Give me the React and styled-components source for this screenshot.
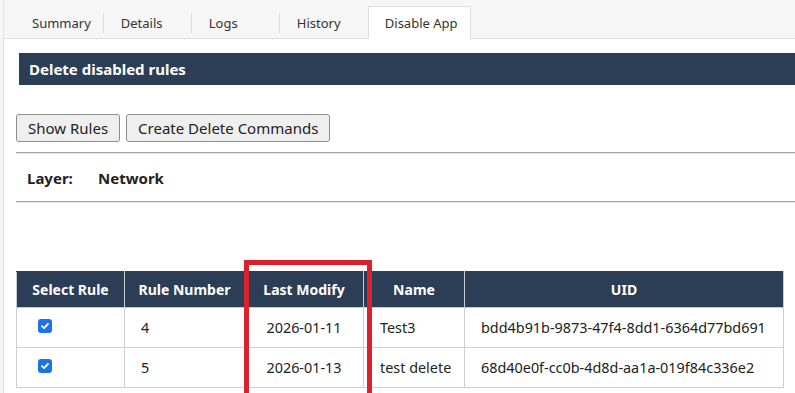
import React from "react";
import styled, { createGlobalStyle } from "styled-components";

const GlobalStyle = createGlobalStyle`
  html, body {
    margin: 0;
    padding: 0;
    background: #f6f6f6;
    font-family: "Noto Sans", "Open Sans", Arial, sans-serif;
    color: #222;
  }
`;

const Page = styled.div`
  margin-left: 3px;
  min-height: 393px;
  border-left: 1px solid #e2e2e2;
  background: #fff;
  overflow: hidden;
`;

const TabBar = styled.div`
  display: flex;
  align-items: flex-end;
  height: 38px;
  padding-left: 11px;
  background: #f6f6f6;
  border-bottom: 1px solid #dedede;
`;

const Tab = styled.div`
  position: relative;
  box-sizing: border-box;
  min-width: 88px;
  padding: 0 12px 0 16px;
  display: flex;
  align-items: center;
  font-size: 13px;
  color: #333;
  margin-bottom: ${(p) => (p.$active ? "-1px" : "0")};
  height: ${(p) => (p.$active ? "33px" : "32px")};
  background: ${(p) => (p.$active ? "#fff" : "transparent")};
  border: 1px solid ${(p) => (p.$active ? "#dedede" : "transparent")};
  border-bottom: none;

  &::after {
    content: "";
    display: ${(p) => (p.$sep ? "block" : "none")};
    position: absolute;
    right: -1px;
    top: 6px;
    bottom: 5px;
    width: 1px;
    background: #dcdcdc;
  }
`;

const Content = styled.div`
  padding: 14px 0 0 12px;
`;

const SectionHeader = styled.div`
  margin-left: 3px;
  height: 32px;
  display: flex;
  align-items: center;
  padding-left: 10px;
  background: #2c3e55;
  color: #fff;
  font-weight: 700;
  font-size: 15px;
`;

const ButtonRow = styled.div`
  display: flex;
  gap: 6px;
  margin-top: 29px;
`;

const Button = styled.button`
  height: 28px;
  padding: 0 11px;
  font-family: inherit;
  font-size: 15px;
  color: #222;
  background: #efefef;
  border: 1px solid #8d8d8d;
  border-radius: 3px;
`;

const Rule = styled.hr`
  margin: 0;
  border: none;
  border-top: 1px solid #a6a6a6;
  border-bottom: 1px solid #e6e6e6;
`;

const TopRule = styled(Rule)`
  margin-top: 10px;
`;

const LayerRow = styled.div`
  display: flex;
  align-items: center;
  height: 47px;
  padding-left: 11px;
  font-size: 15px;
  font-weight: 700;
`;

const LayerLabel = styled.span`
  width: 71px;
`;

const TableWrap = styled.div`
  position: relative;
  margin-top: 68px;
`;

const Table = styled.table`
  width: 767px;
  table-layout: fixed;
  border-collapse: collapse;
  font-size: 14.4px;
`;

const Th = styled.th`
  width: ${(p) => p.$w}px;
  height: 36px;
  padding: 0;
  box-sizing: border-box;
  background: #2c3e55;
  color: #fff;
  font-size: 14px;
  font-weight: 700;
  text-align: center;
  border: 1px solid #c7ccd3;
  border-top-color: #2c3e55;
`;

const Td = styled.td`
  height: 40px;
  padding: 0 0 0 ${(p) => (p.$align === "center" ? 0 : 16)}px;
  box-sizing: border-box;
  white-space: nowrap;
  border: 1px solid #cfcfcf;
  text-align: ${(p) => p.$align || "left"};
  color: #222;
`;

const CheckBox = styled.span`
  display: inline-flex;
  align-items: center;
  justify-content: center;
  width: 14px;
  height: 14px;
  margin-left: 5px;
  margin-bottom: 5px;
  border-radius: 3px;
  background: #1a73e8;
  vertical-align: middle;
`;

const Highlight = styled.div`
  position: absolute;
  left: 228px;
  top: -11px;
  width: 128px;
  height: 150px;
  box-sizing: border-box;
  border: 5px solid #d8232e;
  pointer-events: none;
`;

const columns = [
  { label: "Select Rule", w: 108 },
  { label: "Rule Number", w: 120 },
  { label: "Last Modify", w: 119 },
  { label: "Name", w: 101 },
  { label: "UID", w: 319 },
];

const rules = [
  { num: 4, date: "2026-01-11", name: "Test3", uid: "bdd4b91b-9873-47f4-8dd1-6364d77bd691" },
  { num: 5, date: "2026-01-13", name: "test delete", uid: "68d40e0f-cc0b-4d8d-aa1a-019f84c336e2" },
];

const tabs = ["Summary", "Details", "Logs", "History", "Disable App"];

const Check = () => (
  <CheckBox>
    <svg width="10" height="10" viewBox="0 0 10 10">
      <path d="M2 5.2 L4.1 7.2 L8 2.8" fill="none" stroke="#fff" strokeWidth="1.8" strokeLinecap="round" strokeLinejoin="round" />
    </svg>
  </CheckBox>
);

const App = () => {
  return (
    <>
      <GlobalStyle />
      <Page>
        <TabBar>
          {tabs.map((t, i) => (
            <Tab key={t} $active={i === 4} $sep={i < 3}>
              {t}
            </Tab>
          ))}
        </TabBar>
        <Content>
          <SectionHeader>Delete disabled rules</SectionHeader>
          <ButtonRow>
            <Button>Show Rules</Button>
            <Button>Create Delete Commands</Button>
          </ButtonRow>
          <TopRule />
          <LayerRow>
            <LayerLabel>Layer:</LayerLabel>
            <span>Network</span>
          </LayerRow>
          <Rule />
          <TableWrap>
            <Table>
              <thead>
                <tr>
                  {columns.map((c) => (
                    <Th key={c.label} $w={c.w}>
                      {c.label}
                    </Th>
                  ))}
                </tr>
              </thead>
              <tbody>
                {rules.map((r) => (
                  <tr key={r.uid}>
                    <Td>
                      <Check />
                    </Td>
                    <Td>{r.num}</Td>
                    <Td $align="center">{r.date}</Td>
                    <Td>{r.name}</Td>
                    <Td>{r.uid}</Td>
                  </tr>
                ))}
              </tbody>
            </Table>
            <Highlight />
          </TableWrap>
        </Content>
      </Page>
    </>
  );
};

export default App;
